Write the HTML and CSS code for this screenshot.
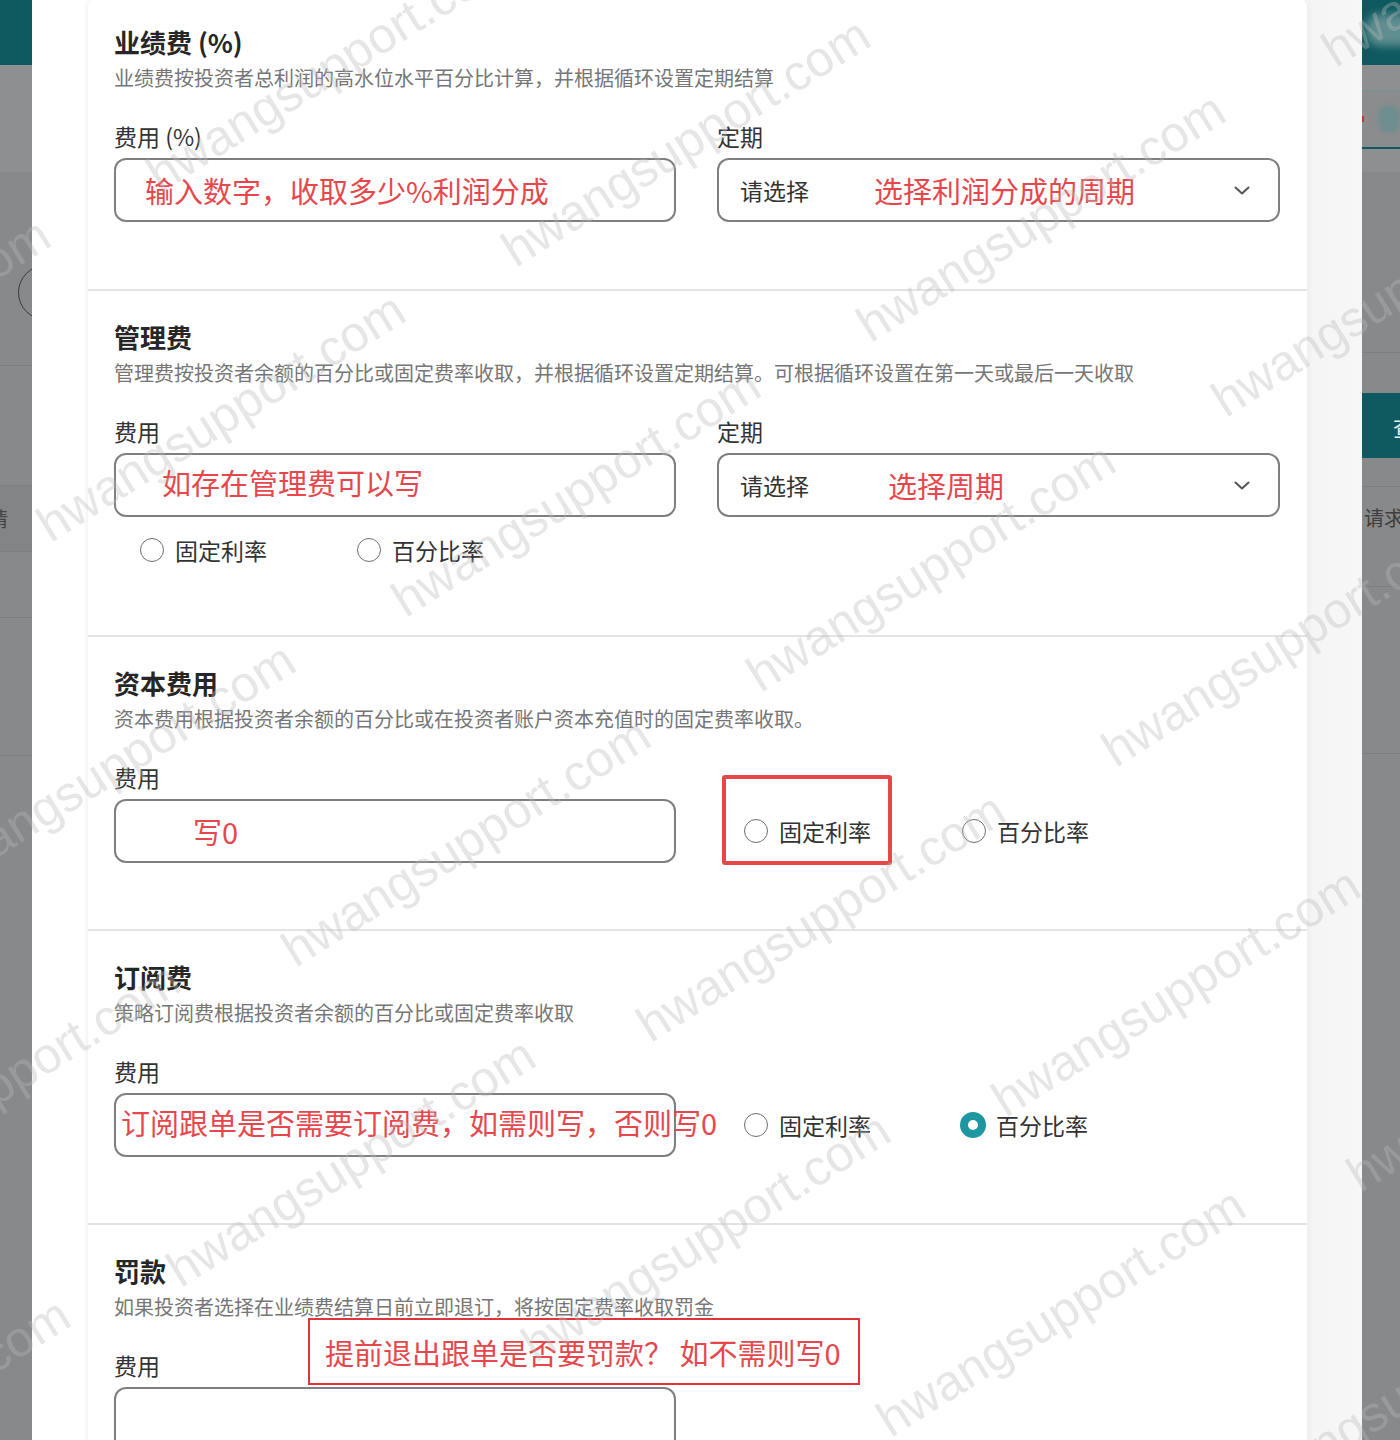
FILE: index.html
```html
<!DOCTYPE html>
<html lang="zh-CN">
<head>
<meta charset="utf-8">
<title>费用设置</title>
<link rel="stylesheet" href="styles.css">
</head>
<body>
<div class="page">
  <div class="strip-left">
    <div class="ls-top"></div>
    <div class="ls-band"></div>
    <div class="ls-a"><div class="ls-circle"></div></div>
    <div class="ls-b"></div>
    <div class="ls-c"><span class="ls-text">请</span></div>
    <div class="ls-d"></div>
    <div class="ls-e"></div>
    <div class="ls-f"></div>
  </div>

  <div class="panel">
    <div class="card">
      <section class="sec sec-1">
        <h2 class="sec-title">业绩费 (%)</h2>
        <p class="sec-desc">业绩费按投资者总利润的高水位水平百分比计算，并根据循环设置定期结算</p>
        <div class="cols">
          <div class="field">
            <div class="label">费用 (%)</div>
            <div class="input"><span class="note note-1">输入数字，收取多少%利润分成</span></div>
          </div>
          <div class="field">
            <div class="label">定期</div>
            <div class="input select">
              <span class="ph">请选择</span><span class="note note-s1">选择利润分成的周期</span>
              <svg class="chev" width="16" height="9" viewBox="0 0 16 9"><path d="M1.5 1.5 L8 7.5 L14.5 1.5" fill="none" stroke="#555" stroke-width="2" stroke-linecap="round" stroke-linejoin="round"/></svg>
            </div>
          </div>
        </div>
      </section>

      <section class="sec sec-2">
        <h2 class="sec-title">管理费</h2>
        <p class="sec-desc">管理费按投资者余额的百分比或固定费率收取，并根据循环设置定期结算。可根据循环设置在第一天或最后一天收取</p>
        <div class="cols">
          <div class="field">
            <div class="label">费用</div>
            <div class="input"><span class="note note-2">如存在管理费可以写</span></div>
          </div>
          <div class="field">
            <div class="label">定期</div>
            <div class="input select">
              <span class="ph">请选择</span><span class="note note-s2">选择周期</span>
              <svg class="chev" width="16" height="9" viewBox="0 0 16 9"><path d="M1.5 1.5 L8 7.5 L14.5 1.5" fill="none" stroke="#555" stroke-width="2" stroke-linecap="round" stroke-linejoin="round"/></svg>
            </div>
          </div>
        </div>
        <div class="radios">
          <label class="radio"><span class="dot"></span>固定利率</label>
          <label class="radio"><span class="dot"></span>百分比率</label>
        </div>
      </section>

      <section class="sec sec-3">
        <h2 class="sec-title">资本费用</h2>
        <p class="sec-desc">资本费用根据投资者余额的百分比或在投资者账户资本充值时的固定费率收取。</p>
        <div class="cols">
          <div class="field">
            <div class="label">费用</div>
            <div class="input"><span class="note note-3">写0</span></div>
          </div>
          <div class="rc">
            <div class="hl-box">
              <label class="radio"><span class="dot"></span>固定利率</label>
            </div>
            <label class="radio radio-out"><span class="dot"></span>百分比率</label>
          </div>
        </div>
      </section>

      <section class="sec sec-4">
        <h2 class="sec-title">订阅费</h2>
        <p class="sec-desc">策略订阅费根据投资者余额的百分比或固定费率收取</p>
        <div class="cols">
          <div class="field">
            <div class="label">费用</div>
            <div class="input"><span class="note note-4">订阅跟单是否需要订阅费，如需则写，否则写0</span></div>
          </div>
          <div class="rc2">
            <label class="radio"><span class="dot"></span>固定利率</label>
            <label class="radio"><span class="dot on"></span>百分比率</label>
          </div>
        </div>
      </section>

      <section class="sec sec-5">
        <h2 class="sec-title">罚款</h2>
        <p class="sec-desc">如果投资者选择在业绩费结算日前立即退订，将按固定费率收取罚金</p>
        <div class="cols">
          <div class="field">
            <div class="label">费用</div>
            <div class="input"></div>
          </div>
        </div>
        <div class="ann">提前退出跟单是否要罚款？ 如不需则写0</div>
      </section>
    </div>
  </div>

  <div class="strip-right">
    <div class="rs-top"><div class="rs-blur"></div></div>
    <div class="rs-b1"></div>
    <div class="rs-b2"><span class="rs-red"></span><div class="rs-pill"></div></div>
    <div class="rs-line"></div>
    <div class="rs-b3"></div>
    <div class="rs-c"></div>
    <div class="rs-d"></div>
    <div class="rs-btn"><span class="rs-btn-text">查</span></div>
    <div class="rs-e"></div>
    <div class="rs-f"><span class="rs-text">请求</span></div>
    <div class="rs-g"></div>
    <div class="rs-h"></div>
  </div>
</div>

<div class="wm-layer">
  <span class="wm w1">hwangsupport.com</span>
  <span class="wm w2">hwangsupport.com</span>
  <span class="wm w3">hwangsupport.com</span>
  <span class="wm w4">hwangsupport.com</span>
  <span class="wm w5">hwangsupport.com</span>
  <span class="wm w6">hwangsupport.com</span>
  <span class="wm w7">hwangsupport.com</span>
  <span class="wm w8">hwangsupport.com</span>
  <span class="wm w9">hwangsupport.com</span>
  <span class="wm w10">hwangsupport.com</span>
  <span class="wm w11">hwangsupport.com</span>
  <span class="wm w12">hwangsupport.com</span>
  <span class="wm w13">hwangsupport.com</span>
  <span class="wm w14">hwangsupport.com</span>
  <span class="wm w15">hwangsupport.com</span>
  <span class="wm w16">hwangsupport.com</span>
  <span class="wm w17">hwangsupport.com</span>
  <span class="wm w18">hwangsupport.com</span>
  <span class="wm w19">hwangsupport.com</span>
  <span class="wm w20">hwangsupport.com</span>
  <span class="wm w21">hwangsupport.com</span>
</div>
</body>
</html>
```

FILE: styles.css
```css
* { box-sizing: border-box; }

body {
  margin: 0;
  width: 1400px;
  height: 1440px;
  overflow: hidden;
  position: relative;
  background: #87898a;
  font-family: "Noto Sans CJK SC", "Noto Sans", sans-serif;
  color: #333;
}

.page {
  display: flex;
  height: 1440px;
}

/* ---------- dimmed background strips ---------- */
.strip-left {
  width: 32px;
  flex: none;
  overflow: hidden;
  background: #87898a;
}
.ls-top { height: 65px; background: #0e5a60; }
.ls-band { height: 107px; background: #8e8f90; }
.ls-a { height: 193px; padding-top: 93px; background: #87898a; }
.ls-circle {
  width: 55px; height: 55px;
  margin-left: 18px;
  border: 1.5px solid #3a3a3a;
  border-radius: 50%;
}
.ls-b { height: 120px; border-top: 1px solid #7c7e7f; }
.ls-c {
  height: 66px;
  border-top: 1px solid #7c7e7f;
  background: #828485;
  display: flex;
  align-items: center;
  overflow: hidden;
}
.ls-text { margin-left: -12px; font-size: 20px; color: #444; }
.ls-d { height: 66px; border-top: 1px solid #7c7e7f; }
.ls-e { height: 138px; border-top: 1px solid #7c7e7f; }
.ls-f { height: 700px; border-top: 1px solid #7c7e7f; }

.strip-right {
  width: 38px;
  flex: none;
  overflow: hidden;
  background: #87898a;
}
.rs-top { height: 65px; background: #0e5a60; padding-top: 14px; }
.rs-blur {
  height: 32px; width: 50px; margin-left: 4px;
  background: #5f8d90;
  border-radius: 14px;
  filter: blur(4px);
}
.rs-b1 { height: 26px; background: #8e8f90; border-bottom: 1px solid #6f9294; }
.rs-b2 {
  height: 56px; background: #8b8c8d;
  display: flex; align-items: center;
}
.rs-red { width: 3px; height: 6px; background: #c0392b; margin-right: 14px; }
.rs-pill {
  width: 40px; height: 28px;
  background: #6e8d90;
  border-radius: 12px;
  filter: blur(2px);
}
.rs-line { height: 2px; background: #0e5a60; }
.rs-b3 { height: 23px; background: #8e8f90; }
.rs-c { height: 181px; border-bottom: 1px solid #7c7e7f; }
.rs-d { height: 40px; }
.rs-btn {
  height: 65px; background: #0e5a60;
  display: flex; align-items: center;
}
.rs-btn-text { margin-left: 31px; color: #e6eeee; font-size: 22px; }
.rs-e { height: 29px; border-bottom: 1px solid #7c7e7f; }
.rs-f {
  height: 100px; border-bottom: 1px solid #7c7e7f;
  padding-top: 16px;
}
.rs-text { margin-left: 2px; font-size: 20px; color: #3e3e3e; white-space: nowrap; }
.rs-g { height: 167px; border-bottom: 1px solid #7c7e7f; }
.rs-h { height: 700px; }

/* ---------- modal panel ---------- */
.panel {
  width: 1330px;
  flex: none;
  padding-left: 56px;
  background: linear-gradient(90deg, #ffffff 0, #ffffff 1272px, #f5f5f5 1278px, #f7f7f7 100%);
  overflow: hidden;
}

.card {
  width: 1219px;
  margin-top: -4px;
  background: #fff;
  border-radius: 12px 12px 0 0;
  box-shadow: 0 0 6px rgba(0, 0, 0, 0.09);
}

.sec {
  padding: 29px 27px 67px 26px;
  border-bottom: 2px solid #e3e3e3;
}
.sec-2 { padding-bottom: 70px; }
.sec-3, .sec-4 { padding-bottom: 66px; }
.sec-5 { position: relative; border-bottom: 0; }

.sec-title {
  margin: 0;
  font-size: 26px;
  line-height: 34px;
  font-weight: 700;
  color: #262626;
}
.sec-desc {
  margin: 5px 0 0;
  font-size: 20px;
  line-height: 28px;
  color: #767676;
  white-space: nowrap;
}

.cols {
  display: grid;
  grid-template-columns: 562px 563px;
  column-gap: 41px;
  margin-top: 29px;
}

.label {
  font-size: 23px;
  line-height: 30px;
  color: #333;
}

.input {
  margin-top: 7px;
  height: 64px;
  border: 2px solid #7f7f7f;
  border-radius: 12px;
  display: flex;
  align-items: center;
  white-space: nowrap;
  background: transparent;
}

.select { padding: 0 28px 0 21px; }
.ph { font-size: 23px; color: #333; }
.chev { margin-left: auto; flex: none; }

.note {
  color: #e6474c;
  font-size: 29px;
  line-height: 36px;
}
.note-1 { margin-left: 29px; }
.note-2 { margin-left: 46px; margin-top: -6px; }
.note-3 { margin-left: 77px; }
.note-4 { margin-left: 5px; margin-top: -6px; }
.note-s1 { margin-left: 65px; }
.note-s2 { margin-left: 79px; }

/* radios */
.radios {
  display: flex;
  gap: 90px;
  padding-left: 26px;
  margin-top: 18px;
}
.radio {
  display: flex;
  align-items: center;
  gap: 11px;
  font-size: 23px;
  line-height: 30px;
  color: #333;
  white-space: nowrap;
}
.dot {
  width: 24px;
  height: 24px;
  flex: none;
  border: 1.5px solid #6f6f6f;
  border-radius: 50%;
  background: #fff;
}
.dot.on {
  width: 26px;
  height: 26px;
  margin: 0 -1px;
  border: 8px solid #1f97a0;
}

.rc {
  display: flex;
  align-items: flex-end;
  align-self: end;
  margin-bottom: -2px;
}
.hl-box {
  margin-left: 5px;
  border: 4px solid #e8474a;
  border-radius: 3px;
  padding: 37px 17px 15px 18px;
}
.radio-out {
  margin-left: 70px;
  margin-bottom: 19px;
}

.rc2 {
  display: flex;
  align-items: center;
  align-self: end;
  height: 64px;
  gap: 90px;
  padding-left: 27px;
}

.ann {
  position: absolute;
  left: 220px;
  top: 93px;
  width: 552px;
  height: 67px;
  border: 2px solid #e0343a;
  display: flex;
  align-items: center;
  padding-left: 15px;
  font-size: 29px;
  color: #e6474c;
  white-space: nowrap;
}

/* ---------- watermark ---------- */
.wm-layer {
  position: absolute;
  left: 0;
  top: 0;
  width: 1400px;
  height: 1440px;
  overflow: hidden;
  pointer-events: none;
}
.wm {
  position: absolute;
  font-family: "Liberation Sans", Arial, sans-serif;
  font-size: 50px;
  line-height: 50px;
  color: rgba(185, 185, 185, 0.36);
  white-space: nowrap;
  transform-origin: 0 100%;
  transform: rotate(-32deg);
}
.w1 { left: -300px; top: 425px; }
.w2 { left: 55px; top: 500px; }
.w3 { left: 410px; top: 575px; }
.w4 { left: 765px; top: 650px; }
.w5 { left: 1120px; top: 725px; }
.w6 { left: 1340px; top: 25px; }
.w7 { left: 165px; top: 150px; }
.w8 { left: 520px; top: 225px; }
.w9 { left: 875px; top: 300px; }
.w10 { left: 1230px; top: 375px; }
.w11 { left: -55px; top: 850px; }
.w12 { left: 300px; top: 925px; }
.w13 { left: 655px; top: 1000px; }
.w14 { left: 1010px; top: 1075px; }
.w15 { left: 1365px; top: 1150px; }
.w16 { left: -170px; top: 1170px; }
.w17 { left: 185px; top: 1245px; }
.w18 { left: 540px; top: 1320px; }
.w19 { left: 895px; top: 1395px; }
.w20 { left: -280px; top: 1505px; }
.w21 { left: 1250px; top: 1470px; }
```
